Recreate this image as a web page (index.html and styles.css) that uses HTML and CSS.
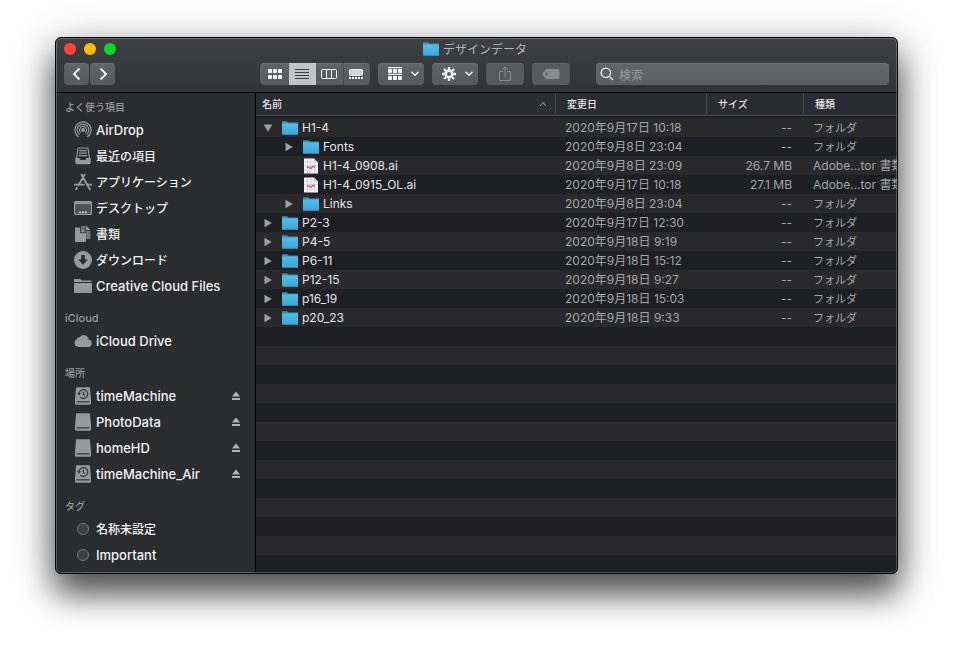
FILE: index.html
```html
<!DOCTYPE html>
<html lang="ja">
<head>
<meta charset="utf-8">
<title>デザインデータ</title>
<link rel="stylesheet" href="styles.css">
</head>
<body>
<svg class="defs" aria-hidden="true">
  <defs>
    <linearGradient id="blue" x1="0" y1="0" x2="0" y2="1">
      <stop offset="0" stop-color="#57bce6"/><stop offset=".8" stop-color="#3bacdb"/><stop offset="1" stop-color="#3aa3cf"/>
    </linearGradient>
    <symbol id="folder" viewBox="0 0 16 14">
      <path d="M0 .3H5L6.600 1.600H16V6H0Z" fill="#3593bd"/>
      <path d="M0 2.600H16V13.400Q16 13.800 15.600 13.800H.4Q0 13.800 0 13.400Z" fill="url(#blue)"/>
    </symbol>
    <symbol id="aifile" viewBox="0 0 16 16">
      <path d="M1 .5H11L15 4.500V15.500H1Z" fill="#f4f5f8"/>
      <path d="M1 4H11M1 7.500H15M1 12H15M4.500 .5V15.500M8 .5V15.500M11.500 4.500V15.500" stroke="#c9d2e6" stroke-width=".8" fill="none"/>
      <path d="M11 .5V4.500H15Z" fill="#c4c7cd"/>
      <path d="M4 10Q5 8 6.500 9.500T9 9.200T12 9.700" stroke="#cf7572" stroke-width="1.800" fill="none"/>
    </symbol>
    <symbol id="tri" viewBox="0 0 8 10"><path d="M.5.7 7.800 5 .5 9.300Z" fill="currentColor"/></symbol>
    <symbol id="drive" viewBox="0 0 18 18">
      <path d="M3 .2H15Q15.800.2 16 1.100L17 13V16.200Q17 17.800 15.500 17.800H2.500Q1 17.800 1 16.200V13L2 1.100Q2.200.2 3 .2Z" fill="currentColor"/>
      <path d="M2.500 14.200H15.500V15.500H2.500Z" fill="#3a3b3d"/>
    </symbol>
    <symbol id="tm" viewBox="0 0 18 18">
      <use href="#drive"/>
      <g fill="none" stroke="#38393b" stroke-width="1.200"><path d="M5 7.200A4.400 4.400 0 1 1 6.400 10.200M9.300 4.500V7.200L11.200 8.400"/></g>
      <path d="M2.800 6H7L4.900 8.800Z" fill="#38393b"/>
    </symbol>
    <symbol id="eject" viewBox="0 0 10 10"><path d="M5 .5 9 5.500H1ZM1 7H9V9H1Z" fill="currentColor"/></symbol>
    <symbol id="down" viewBox="0 0 8 6"><path d="M1 1.200 4 4.200 7 1.200" fill="none" stroke="currentColor" stroke-width="1.500" stroke-linecap="round" stroke-linejoin="round"/></symbol>
  </defs>
</svg>
<main class="window">
  <header class="chrome">
    <div class="titlebar">
      <div class="lights">
        <button class="light red" aria-label="閉じる"></button>
        <button class="light yellow" aria-label="しまう"></button>
        <button class="light green" aria-label="拡大"></button>
      </div>
      <h1 class="title"><svg class="folder"><use href="#folder"/></svg>デザインデータ</h1>
    </div>
    <div class="toolbar">
      <nav class="history">
        <button class="btn nav" aria-label="戻る"><svg width="10" height="14" viewBox="0 0 10 14"><path d="M7.500 1.500 2 7 7.500 12.500"/></svg></button>
        <button class="btn nav" aria-label="進む"><svg width="10" height="14" viewBox="0 0 10 14"><path d="M2.500 1.500 8 7 2.500 12.500"/></svg></button>
      </nav>
      <div class="segments">
        <button class="seg" aria-label="アイコン"><svg width="16" height="12" viewBox="0 0 16 12" fill="currentColor"><rect x="1" y="1" width="4" height="4" rx=".8"/><rect x="6" y="1" width="4" height="4" rx=".8"/><rect x="11" y="1" width="4" height="4" rx=".8"/><rect x="1" y="7" width="4" height="4" rx=".8"/><rect x="6" y="7" width="4" height="4" rx=".8"/><rect x="11" y="7" width="4" height="4" rx=".8"/></svg></button>
        <button class="seg on" aria-label="リスト" aria-pressed="true"><svg width="14" height="12" viewBox="0 0 14 12"><path d="M0 1.500H14M0 4.500H14M0 7.500H14M0 10.500H14" stroke="currentColor"/></svg></button>
        <button class="seg" aria-label="カラム"><svg width="16" height="12" viewBox="0 0 16 12" fill="none" stroke="currentColor"><rect x=".5" y="1.500" width="15" height="9" rx="1"/><path d="M5.500 1.500V10.500M10.500 1.500V10.500"/></svg></button>
        <button class="seg" aria-label="ギャラリー"><svg width="14" height="12" viewBox="0 0 14 12"><rect x=".5" y="1.500" width="13" height="6" rx=".8" fill="#d5d5d7" stroke="currentColor"/><path d="M0 10H14" stroke="currentColor" stroke-width="2" stroke-dasharray="2 1"/></svg></button>
      </div>
      <button class="btn menu" aria-label="グループ"><svg width="16" height="14" viewBox="0 0 16 14" fill="currentColor"><path d="M1 0H15V1.200H1ZM1 6.800H15V8H1Z"/><rect x="1" y="2" width="4" height="4" rx=".8"/><rect x="6" y="2" width="4" height="4" rx=".8"/><rect x="11" y="2" width="4" height="4" rx=".8"/><rect x="1" y="9" width="4" height="4" rx=".8"/><rect x="6" y="9" width="4" height="4" rx=".8"/><rect x="11" y="9" width="4" height="4" rx=".8"/></svg><svg width="8" height="6"><use href="#down"/></svg></button>
      <button class="btn menu" aria-label="操作"><svg width="16" height="14" viewBox="0 0 16 16"><g fill="none" stroke="currentColor"><circle cx="8" cy="8" r="3.800" stroke-width="3"/><path d="M8 0V3M8 13V16M0 8H3M13 8H16M2.300 2.300 4.500 4.500M11.500 11.500 13.700 13.700M2.300 13.700 4.500 11.500M11.500 4.500 13.700 2.300" stroke-width="2.600"/></g></svg><svg width="8" height="6"><use href="#down"/></svg></button>
      <button class="btn wide" aria-label="共有" disabled><svg width="12" height="16" viewBox="0 0 12 16" fill="none" stroke="currentColor"><path d="M4 5.500H.5V14.500H11.500V5.500H8M6 10.500V1.200M3.300 3.700 6 1 8.700 3.700"/></svg></button>
      <button class="btn wide" aria-label="タグ" disabled><svg width="18" height="10" viewBox="0 0 18 10"><path fill-rule="evenodd" d="M5 0H16Q17.500 0 17.500 1.500V8.500Q17.500 10 16 10H5Q4 10 3 9L.7 6Q0 5 .7 4L3 1Q4 0 5 0ZM4.500 3.800A1.200 1.200 0 1 0 4.500 6.200 1.200 1.200 0 0 0 4.500 3.800Z" fill="currentColor"/></svg></button>
      <label class="search"><svg width="14" height="14" viewBox="0 0 14 14" fill="none" stroke="currentColor" stroke-width="1.200"><circle cx="5.800" cy="5.800" r="4.700"/><path d="M9.300 9.300 13 13"/></svg><input type="search" placeholder="検索" aria-label="検索"></label>
    </div>
  </header>
  <div class="panes">
    <aside class="sidebar">
      <section>
        <h2 class="jp">よく使う項目</h2>
        <ul>
          <li><a href="#"><svg viewBox="0 0 18 18" fill="none" stroke="currentColor" stroke-width="1.200"><path d="M4.600 15.800A8.100 8.100 0 1 1 13.400 15.800M5.600 13.600A5.800 5.800 0 1 1 12.400 13.600M6.700 11.600A3.500 3.500 0 1 1 11.300 11.600"/><circle cx="9" cy="9" r="1.300" fill="currentColor"/></svg>AirDrop</a></li>
          <li><a href="#" class="jp"><svg viewBox="0 0 18 18"><path d="M2.500 11.500 4 1.600Q4.100 1 4.700 1H13.300Q13.900 1 14 1.600L15.500 11.500" stroke="currentColor" fill="none" stroke-width="1.200"/><path d="M5.300 3.700H12.700M5 6.200H13M4.700 8.700H13.300" stroke="currentColor" stroke-width="1.300"/><path d="M1.300 11H5.500L6.500 13H11.500L12.500 11H16.700V15.500Q16.700 17.200 15 17.200H3Q1.300 17.200 1.300 15.500Z" fill="currentColor"/></svg>最近の項目</a></li>
          <li><a href="#" class="jp"><svg viewBox="0 0 18 18" fill="none" stroke="currentColor" stroke-width="1.900" stroke-linecap="round"><path d="M10.600 1.800 4.600 12M3 14.800 2.200 16.200M7.600 1.800 15.800 16.200M.9 11.600H10M14 11.600H17.200"/></svg>アプリケーション</a></li>
          <li><a href="#" class="jp"><svg viewBox="0 0 18 18"><rect x=".6" y="2.600" width="16.800" height="12.800" rx="1" fill="#505154" stroke="currentColor" stroke-width="1.200"/><path d="M.6 4.200H17.400" stroke="currentColor" stroke-width="1.800"/><path d="M5 12.500H7V14H5ZM8 12.500H10V14H8ZM11 12.500H13V14H11Z" fill="#d0d0d2"/></svg>デスクトップ</a></li>
          <li><a href="#" class="jp"><svg viewBox="0 0 18 18"><path d="M7 1H11.500V6H16.500V14H12.500L7 7Z" fill="#707174"/><path d="M12 .5 16.700 5.200H12Z" fill="currentColor"/><path d="M1 2.500H6.300V8.300H12V17H1Z" fill="currentColor"/><path d="M7 2.500 12 7.500H7Z" fill="currentColor" stroke="#2b2c2e" stroke-width=".6"/></svg>書類</a></li>
          <li><a href="#" class="jp"><svg viewBox="0 0 18 18"><circle cx="9" cy="9" r="9" fill="currentColor"/><path d="M7.200 4H10.800V8.500H13.700L9 13.800 4.300 8.500H7.200Z" fill="#2b2c2e"/></svg>ダウンロード</a></li>
          <li><a href="#"><svg viewBox="0 0 18 18"><path d="M0 2H6L7.500 3.500H17.500V5H0ZM0 6H18V16H0Z" fill="currentColor"/></svg>Creative Cloud Files</a></li>
        </ul>
      </section>
      <section>
        <h2>iCloud</h2>
        <ul>
          <li><a href="#"><svg viewBox="0 0 18 18"><path d="M4 15A4 4 0 0 1 2.600 7.500 3 3 0 0 1 5.800 5.200 4.800 4.800 0 0 1 14.600 7.500 3.800 3.800 0 0 1 14.500 15Z" fill="currentColor"/></svg>iCloud Drive</a></li>
        </ul>
      </section>
      <section>
        <h2 class="jp">場所</h2>
        <ul>
          <li><a href="#"><svg><use href="#tm"/></svg>timeMachine</a><button class="eject" aria-label="取り出す"><svg><use href="#eject"/></svg></button></li>
          <li><a href="#"><svg><use href="#drive"/></svg>PhotoData</a><button class="eject" aria-label="取り出す"><svg><use href="#eject"/></svg></button></li>
          <li><a href="#"><svg><use href="#drive"/></svg>homeHD</a><button class="eject" aria-label="取り出す"><svg><use href="#eject"/></svg></button></li>
          <li><a href="#"><svg><use href="#tm"/></svg>timeMachine_Air</a><button class="eject" aria-label="取り出す"><svg><use href="#eject"/></svg></button></li>
        </ul>
      </section>
      <section>
        <h2 class="jp">タグ</h2>
        <ul>
          <li><a href="#" class="jp"><svg viewBox="0 0 18 18"><circle cx="9" cy="9" r="5.500" fill="#3e3f42" stroke="#77787b"/></svg>名称未設定</a></li>
          <li><a href="#"><svg viewBox="0 0 18 18"><circle cx="9" cy="9" r="5.500" fill="#3e3f42" stroke="#77787b"/></svg>Important</a></li>
        </ul>
      </section>
    </aside>
    <div class="list">
      <table>
        <colgroup><col><col class="c-date"><col class="c-size"><col class="c-kind"></colgroup>
        <thead>
          <tr><th><div class="head">名前<svg width="8" height="6" viewBox="0 0 8 6"><path d="M1 5 4 1.500 7 5" fill="none" stroke="#a0a0a3"/></svg></div></th><th><div class="head">変更日</div></th><th><div class="head">サイズ</div></th><th><div class="head">種類</div></th></tr>
        </thead>
        <tbody>
          <tr><td><div class="name"><button class="tri open" aria-label="閉じる"><svg><use href="#tri"/></svg></button><svg class="folder"><use href="#folder"/></svg>H1-4</div></td><td>2020年9月17日 10:18</td><td>--</td><td class="kana">フォルダ</td></tr>
          <tr><td><div class="name sub"><button class="tri" aria-label="開く"><svg><use href="#tri"/></svg></button><svg class="folder"><use href="#folder"/></svg>Fonts</div></td><td>2020年9月8日 23:04</td><td>--</td><td class="kana">フォルダ</td></tr>
          <tr><td><div class="name file"><svg><use href="#aifile"/></svg>H1-4_0908.ai</div></td><td>2020年9月8日 23:09</td><td>26.7 MB</td><td>Adobe…tor 書類</td></tr>
          <tr><td><div class="name file"><svg><use href="#aifile"/></svg>H1-4_0915_OL.ai</div></td><td>2020年9月17日 10:18</td><td>27.1 MB</td><td>Adobe…tor 書類</td></tr>
          <tr><td><div class="name sub"><button class="tri" aria-label="開く"><svg><use href="#tri"/></svg></button><svg class="folder"><use href="#folder"/></svg>Links</div></td><td>2020年9月8日 23:04</td><td>--</td><td class="kana">フォルダ</td></tr>
          <tr><td><div class="name"><button class="tri" aria-label="開く"><svg><use href="#tri"/></svg></button><svg class="folder"><use href="#folder"/></svg>P2-3</div></td><td>2020年9月17日 12:30</td><td>--</td><td class="kana">フォルダ</td></tr>
          <tr><td><div class="name"><button class="tri" aria-label="開く"><svg><use href="#tri"/></svg></button><svg class="folder"><use href="#folder"/></svg>P4-5</div></td><td>2020年9月18日 9:19</td><td>--</td><td class="kana">フォルダ</td></tr>
          <tr><td><div class="name"><button class="tri" aria-label="開く"><svg><use href="#tri"/></svg></button><svg class="folder"><use href="#folder"/></svg>P6-11</div></td><td>2020年9月18日 15:12</td><td>--</td><td class="kana">フォルダ</td></tr>
          <tr><td><div class="name"><button class="tri" aria-label="開く"><svg><use href="#tri"/></svg></button><svg class="folder"><use href="#folder"/></svg>P12-15</div></td><td>2020年9月18日 9:27</td><td>--</td><td class="kana">フォルダ</td></tr>
          <tr><td><div class="name"><button class="tri" aria-label="開く"><svg><use href="#tri"/></svg></button><svg class="folder"><use href="#folder"/></svg>p16_19</div></td><td>2020年9月18日 15:03</td><td>--</td><td class="kana">フォルダ</td></tr>
          <tr><td><div class="name"><button class="tri" aria-label="開く"><svg><use href="#tri"/></svg></button><svg class="folder"><use href="#folder"/></svg>p20_23</div></td><td>2020年9月18日 9:33</td><td>--</td><td class="kana">フォルダ</td></tr>
        </tbody>
      </table>
    </div>
  </div>
</main>
</body>
</html>
```
FILE: styles.css
```css
* { box-sizing: border-box; }

body {
  margin: 0;
  min-height: 100vh;
  padding: 37px 55px 73px;
  display: flex;
  background: #fff;
  font: 12px/18px Inter, "Noto Sans CJK JP", sans-serif;
  color: #e4e4e5;
  overflow: hidden;
}

button { margin: 0; padding: 0; border: 0; background: none; color: inherit; font: inherit; }
.defs { position: absolute; width: 0; height: 0; }
.jp, .kana, .title, .search input { font-family: "Noto Sans CJK JP", Inter, sans-serif; }

.window {
  position: relative;
  flex: 1;
  min-width: 0;
  display: flex;
  flex-direction: column;
  border: 1px solid #000;
  border-radius: 6px;
  overflow: hidden;
  background: #1e1f23;
  box-shadow: 0 20px 32px rgba(0, 0, 0, .6), 0 8px 44px rgba(0, 0, 0, .3);
}
.window::after {
  content: "";
  position: absolute;
  inset: 0;
  border: 1px solid rgba(255, 255, 255, .24);
  border-radius: 5px;
  pointer-events: none;
}

.chrome {
  padding-bottom: 7px;
  background: linear-gradient(#3f4043, #323336);
  border-bottom: 1px solid #000;
}
.titlebar { position: relative; height: 25px; padding-bottom: 3px; display: flex; align-items: center; }
.lights { position: absolute; left: 8px; display: flex; gap: 8px; }
.light { width: 12px; height: 12px; border-radius: 50%; }
.red { background: #ff4138; }
.yellow { background: #ffbd05; }
.green { background: #04d82c; }
.title { flex: 1; margin: 0; padding-right: 3px; display: flex; justify-content: center; align-items: center; gap: 4px; font-size: 12px; font-weight: 400; color: #b5b5b7; }
.folder { width: 16px; height: 14px; flex: none; }

.toolbar { display: flex; gap: 8px; padding: 0 8px; }
.history { width: 188px; display: flex; gap: 1px; }
.btn, .seg, .search {
  height: 22px;
  display: flex;
  align-items: center;
  justify-content: center;
  background: linear-gradient(#626366, #58595c);
  box-shadow: inset 0 1px rgba(255, 255, 255, .1);
  color: #f3f3f4;
}
.btn { border-radius: 4px; }
.btn:disabled { color: #8a8b8d; background: #58595c; }
.nav { width: 25px; fill: none; stroke: #f0f0f1; stroke-width: 2; }
.menu { width: 46px; gap: 8px; padding-left: 4px; }
.wide { width: 38px; }
.segments { display: flex; border-radius: 4px; overflow: hidden; }
.seg { width: 27px; padding-right: 1px; border-left: 1px solid #4c4d50; }
.seg:first-child { width: 29px; padding-right: 0; border-left: 0; }
.seg.on { background: #c3c4c7; color: #3c3d40; border-left: 0; }
.seg.on + .seg { border-left: 0; }
.seg:last-child { padding-right: 2px; }
.search {
  flex: 1;
  margin-left: 18px;
  padding: 0 4px;
  gap: 5px;
  border-radius: 4px;
  background: linear-gradient(#646569, #5e5f63);
}
.search input { flex: 1; min-width: 0; border: 0; padding: 0; outline: 0; background: none; font-size: 12px; color: #fff; }
.search input::placeholder { color: #98999b; }

.panes { flex: 1; display: flex; min-height: 0; }
.sidebar { width: 200px; flex: none; padding-top: 4px; border-right: 1px solid #000; background: #2b2c2e; }
.sidebar section { margin-bottom: 9px; }
.sidebar section:last-child { margin-bottom: 0; }
.sidebar h2 { margin: 0; padding-left: 9px; font-size: 11px; line-height: 20px; font-weight: 500; color: #98999b; }
.sidebar h2.jp { font-size: 10px; }
.sidebar ul { margin: 0; padding: 0; list-style: none; }
.sidebar li { display: flex; align-items: center; height: 26px; padding: 0 14px 0 18px; }
.sidebar a { flex: 1; display: flex; align-items: center; gap: 4px; font-size: 13px; font-weight: 500; color: #f1f1f2; text-decoration: none; }
.sidebar a.jp { font-size: 12px; }
.sidebar a svg { width: 18px; height: 18px; color: #98999b; }
.eject, .eject svg { display: block; width: 10px; height: 10px; color: #b4b4b6; }

.list {
  flex: 1;
  min-width: 0;
  background: repeating-linear-gradient(#29292b 0 19px, #1e1f23 19px 38px) 0 25px / 100% 38px;
}
table { width: 100%; table-layout: fixed; border-collapse: separate; border-spacing: 0; }
.c-date { width: 151px; }
.c-size { width: 97px; }
.c-kind { width: 94px; }
th { height: 23px; padding: 0; background: #2a2c31; border-bottom: 1px solid #4a4b50; text-align: left; }
tbody::before { content: ""; display: block; height: 2px; }
.head { display: flex; align-items: center; justify-content: space-between; height: 20px; padding: 0 8px 0 11px; border-left: 1px solid #45464a; font-size: 10px; font-weight: 500; color: #e6e6e7; }
th:first-child .head { padding-left: 6px; border-left: 0; }
td { height: 19px; padding: 0 0 0 10px; line-height: 19px; white-space: nowrap; overflow: hidden; color: #a5a5a7; }
td:first-child { padding-left: 7px; }
td:nth-child(3) { padding: 0 11px 0 0; text-align: right; }
td.kana { font-size: 11px; }
.name { display: flex; align-items: center; color: #e4e4e5; }
.name .folder { margin-right: 4px; }
.sub { padding-left: 21px; }
.file { padding-left: 40px; }
.file svg { width: 16px; height: 16px; flex: none; margin-right: 4px; }
.tri { width: 10px; height: 10px; margin-right: 9px; color: #a0a0a2; }
.tri svg { display: block; width: 10px; height: 10px; }
.open svg { transform: rotate(90deg); }
```
